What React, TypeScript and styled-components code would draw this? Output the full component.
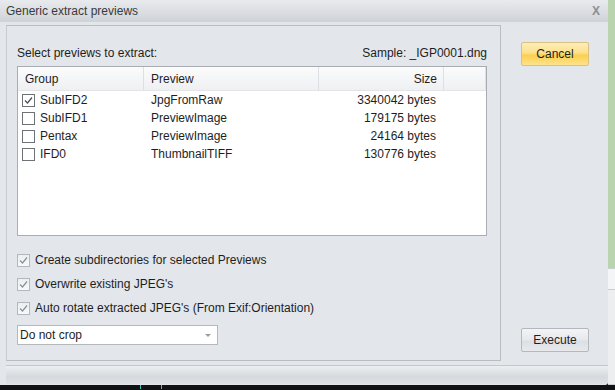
import React from 'react';
import styled, { createGlobalStyle } from 'styled-components';

const GlobalStyle = createGlobalStyle`
  html, body {
    margin: 0;
    padding: 0;
    background: #101214;
  }
  body {
    font-family: "Liberation Sans", Arial, sans-serif;
    font-size: 12px;
    color: #1e1e1e;
  }
`;

// Styled Components
const Screen = styled.div`
  width: 615px;
  height: 390px;
  display: flex;
  flex-direction: column;
  overflow: hidden;
  background: #101214;
`;

const TopArea = styled.div`
  display: flex;
  height: 385px;
`;

const Dialog = styled.div`
  width: 608px;
  height: 385px;
  display: flex;
  flex-direction: column;
  background: #e3e6ea;
  border-bottom-right-radius: 3px;
`;

const Backdrop = styled.div`
  flex: 1;
  display: flex;
  flex-direction: column;
`;

const BackdropPart = styled.div<{ bg: string; h: number }>`
  height: ${(p) => p.h}px;
  background: ${(p) => p.bg};
  border-bottom: 1px solid #c9cdd2;
`;

const BottomStrip = styled.div`
  flex: 1;
  display: flex;
  gap: 20px;
  padding-left: 140px;
`;

const Tick = styled.span`
  width: 1px;
  height: 4px;
  background: #33c0c8;
`;

const TitleBar = styled.div`
  height: 22px;
  display: flex;
  align-items: center;
  justify-content: space-between;
  padding: 0 8px 0 6px;
  background: linear-gradient(#e8eaed, #d9dce1 60%, #cfd3d8);
  color: #3a3a3a;
  font-size: 12px;
`;

const CloseX = styled.span`
  color: #8a8e94;
  font-size: 12px;
  font-weight: bold;
`;

const Body = styled.div`
  display: flex;
  padding: 3px 0 0 6px;
  height: 336px;
`;

const Panel = styled.div`
  box-sizing: border-box;
  width: 495px;
  height: 336px;
  border: 1px solid #b9bdc2;
  border-left-color: #c8ccd1;
  background: #e3e6ea;
  padding: 0 0 0 10px;
  display: flex;
  flex-direction: column;
`;

const PanelHead = styled.div`
  width: 470px;
  height: 40px;
  display: flex;
  align-items: center;
  justify-content: space-between;
  padding-top: 13px;
  box-sizing: border-box;
  color: #1e1e1e;
`;

const Table = styled.div`
  width: 468px;
  height: 168px;
  border: 1px solid #a9adb3;
  background: #fff;
`;

const HeadRow = styled.div`
  display: grid;
  grid-template-columns: 126px 175px 125px 1fr;
  height: 23px;
  background: linear-gradient(#fbfbfc, #eef0f2);
  border-bottom: 1px solid #e2e4e7;
`;

const HeadCell = styled.div<{ right?: boolean }>`
  display: flex;
  align-items: center;
  justify-content: ${(p) => (p.right ? 'flex-end' : 'flex-start')};
  padding: 0 ${(p) => (p.right ? '6px' : '7px')};
  border-right: 1px solid #dcdfe3;
  color: #1e1e1e;
`;

const Row = styled.div`
  display: grid;
  grid-template-columns: 126px 175px 125px 1fr;
  height: 18px;
  align-items: center;
`;

const Cell = styled.div<{ right?: boolean }>`
  display: flex;
  align-items: center;
  gap: 5px;
  justify-content: ${(p) => (p.right ? 'flex-end' : 'flex-start')};
  padding: 0 ${(p) => (p.right ? '8px' : '7px')} 0 ${(p) => (p.right ? '0' : '7px')};
  white-space: nowrap;
`;

const FirstCell = styled(Cell)`
  padding-left: 4px;
`;

const Box = styled.span<{ soft?: boolean }>`
  width: 11px;
  height: 11px;
  flex: none;
  border: 1px solid ${(p) => (p.soft ? '#b4b8bd' : '#6e7277')};
  background: ${(p) => (p.soft ? 'linear-gradient(#eceef0, #f8f9fa)' : '#fff')};
  display: flex;
  align-items: center;
  justify-content: center;
`;

const Options = styled.div`
  display: flex;
  flex-direction: column;
  gap: 10px;
  margin-top: 17px;
`;

const Option = styled.label`
  display: flex;
  align-items: center;
  gap: 5px;
  height: 14px;
  color: #1e1e1e;
`;

const Combo = styled.div`
  margin-top: 10px;
  width: 201px;
  height: 20px;
  border: 1px solid #b4b8bd;
  background: #fff;
  display: flex;
  align-items: center;
  justify-content: space-between;
  padding: 0 6px 0 2px;
  box-sizing: border-box;
`;

const ComboArrow = styled.span`
  width: 0;
  height: 0;
  border-left: 3px solid transparent;
  border-right: 3px solid transparent;
  border-top: 3px solid #9a9ea3;
`;

const SideColumn = styled.div`
  flex: 1;
  display: flex;
  flex-direction: column;
  align-items: flex-start;
  padding: 17px 0 0 20px;
`;

const Button = styled.button<{ primary?: boolean }>`
  width: 68px;
  height: 24px;
  font-family: inherit;
  font-size: 12px;
  color: #1e1e1e;
  border-radius: 2px;
  padding: 0;
  border: 1px solid ${(p) => (p.primary ? '#d9c182' : '#b4b8be')};
  background: ${(p) =>
    p.primary
      ? 'linear-gradient(#fdeeb8, #fde08a 45%, #fcd04c 55%, #fde28e)'
      : 'linear-gradient(#f3f4f6, #e6e8eb 50%, #dcdfe3 55%, #e7e9ec)'};
`;

const Spacer = styled.div`
  flex: 1;
`;

const BottomButton = styled(Button)`
  margin-bottom: 9px;
`;

const StatusBar = styled.div`
  margin: 4px 0 0 6px;
  height: 18px;
  border-top: 1px solid #c4c8cd;
  background: linear-gradient(#eceef0, #d6d9dd 60%, #dfe2e5);
  border-bottom-right-radius: 3px;
`;

function Check({ on, soft }: { on: boolean; soft?: boolean }) {
  return (
    <Box soft={soft}>
      {on && (
        <svg width="9" height="9" viewBox="0 0 9 9">
          <path
            d="M1 4.5 L3.5 7 L8 1.5"
            fill="none"
            stroke={soft ? '#8c9095' : '#4a4d52'}
            strokeWidth="1.2"
          />
        </svg>
      )}
    </Box>
  );
}

const previews = [
  { group: 'SubIFD2', name: 'JpgFromRaw', size: '3340042 bytes', on: true },
  { group: 'SubIFD1', name: 'PreviewImage', size: '179175 bytes', on: false },
  { group: 'Pentax', name: 'PreviewImage', size: '24164 bytes', on: false },
  { group: 'IFD0', name: 'ThumbnailTIFF', size: '130776 bytes', on: false },
];

const options = [
  'Create subdirectories for selected Previews',
  "Overwrite existing JPEG's",
  "Auto rotate extracted JPEG's (From Exif:Orientation)",
];

export default function App() {
  return (
    <Screen>
      <GlobalStyle />
      <TopArea>
        <Dialog>
          <TitleBar>
            <span>Generic extract previews</span>
            <CloseX>X</CloseX>
          </TitleBar>
          <Body>
            <Panel>
              <PanelHead>
                <span>Select previews to extract:</span>
                <span>Sample: _IGP0001.dng</span>
              </PanelHead>
              <Table>
                <HeadRow>
                  <HeadCell>Group</HeadCell>
                  <HeadCell>Preview</HeadCell>
                  <HeadCell right>Size</HeadCell>
                  <HeadCell />
                </HeadRow>
                {previews.map((p) => (
                  <Row key={p.group}>
                    <FirstCell>
                      <Check on={p.on} />
                      {p.group}
                    </FirstCell>
                    <Cell>{p.name}</Cell>
                    <Cell right>{p.size}</Cell>
                    <Cell />
                  </Row>
                ))}
              </Table>
              <Options>
                {options.map((o) => (
                  <Option key={o}>
                    <Check on soft />
                    {o}
                  </Option>
                ))}
              </Options>
              <Combo>
                <span>Do not crop</span>
                <ComboArrow />
              </Combo>
            </Panel>
            <SideColumn>
              <Button primary>Cancel</Button>
              <Spacer />
              <BottomButton>Execute</BottomButton>
            </SideColumn>
          </Body>
          <StatusBar />
        </Dialog>
        <Backdrop>
          <BackdropPart bg="#b9d4ae" h={270} />
          <BackdropPart bg="#f4f5f6" h={20} />
          <BackdropPart bg="#eceef0" h={95} />
        </Backdrop>
      </TopArea>
      <BottomStrip>
        <Tick />
        <Tick />
      </BottomStrip>
    </Screen>
  );
}
